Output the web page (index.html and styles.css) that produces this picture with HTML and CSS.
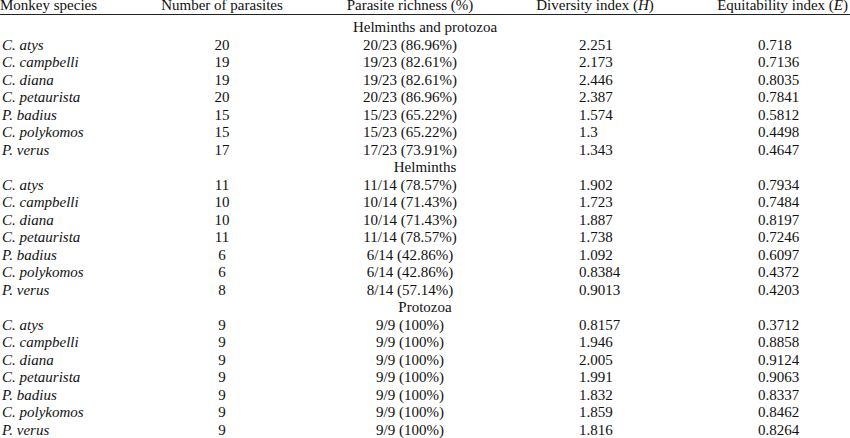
FILE: index.html
```html
<!DOCTYPE html>
<html>
<head>
<meta charset="utf-8">
<link rel="stylesheet" href="styles.css">
</head>
<body>
<table class="data">
  <colgroup>
    <col class="c1"><col class="c2"><col class="c3"><col class="c4"><col class="c5">
  </colgroup>
  <thead>
    <tr>
      <th class="species-h">Monkey species</th>
      <th class="center">Number of parasites</th>
      <th class="center">Parasite richness (%)</th>
      <th class="center">Diversity index (<i>H</i>)</th>
      <th class="eq-h">Equitability index (<i>E</i>)</th>
    </tr>
  </thead>
  <tbody>
    <tr class="section first"><td colspan="5">Helminths and protozoa</td></tr>
    <tr><td class="sp">C. atys</td><td class="center">20</td><td class="center">20/23 (86.96%)</td><td class="div">2.251</td><td class="eq">0.718</td></tr>
    <tr><td class="sp">C. campbelli</td><td class="center">19</td><td class="center">19/23 (82.61%)</td><td class="div">2.173</td><td class="eq">0.7136</td></tr>
    <tr><td class="sp">C. diana</td><td class="center">19</td><td class="center">19/23 (82.61%)</td><td class="div">2.446</td><td class="eq">0.8035</td></tr>
    <tr><td class="sp">C. petaurista</td><td class="center">20</td><td class="center">20/23 (86.96%)</td><td class="div">2.387</td><td class="eq">0.7841</td></tr>
    <tr><td class="sp">P. badius</td><td class="center">15</td><td class="center">15/23 (65.22%)</td><td class="div">1.574</td><td class="eq">0.5812</td></tr>
    <tr><td class="sp">C. polykomos</td><td class="center">15</td><td class="center">15/23 (65.22%)</td><td class="div">1.3</td><td class="eq">0.4498</td></tr>
    <tr><td class="sp">P. verus</td><td class="center">17</td><td class="center">17/23 (73.91%)</td><td class="div">1.343</td><td class="eq">0.4647</td></tr>
    <tr class="section"><td colspan="5">Helminths</td></tr>
    <tr><td class="sp">C. atys</td><td class="center">11</td><td class="center">11/14 (78.57%)</td><td class="div">1.902</td><td class="eq">0.7934</td></tr>
    <tr><td class="sp">C. campbelli</td><td class="center">10</td><td class="center">10/14 (71.43%)</td><td class="div">1.723</td><td class="eq">0.7484</td></tr>
    <tr><td class="sp">C. diana</td><td class="center">10</td><td class="center">10/14 (71.43%)</td><td class="div">1.887</td><td class="eq">0.8197</td></tr>
    <tr><td class="sp">C. petaurista</td><td class="center">11</td><td class="center">11/14 (78.57%)</td><td class="div">1.738</td><td class="eq">0.7246</td></tr>
    <tr><td class="sp">P. badius</td><td class="center">6</td><td class="center">6/14 (42.86%)</td><td class="div">1.092</td><td class="eq">0.6097</td></tr>
    <tr><td class="sp">C. polykomos</td><td class="center">6</td><td class="center">6/14 (42.86%)</td><td class="div">0.8384</td><td class="eq">0.4372</td></tr>
    <tr><td class="sp">P. verus</td><td class="center">8</td><td class="center">8/14 (57.14%)</td><td class="div">0.9013</td><td class="eq">0.4203</td></tr>
    <tr class="section"><td colspan="5">Protozoa</td></tr>
    <tr><td class="sp">C. atys</td><td class="center">9</td><td class="center">9/9 (100%)</td><td class="div">0.8157</td><td class="eq">0.3712</td></tr>
    <tr><td class="sp">C. campbelli</td><td class="center">9</td><td class="center">9/9 (100%)</td><td class="div">1.946</td><td class="eq">0.8858</td></tr>
    <tr><td class="sp">C. diana</td><td class="center">9</td><td class="center">9/9 (100%)</td><td class="div">2.005</td><td class="eq">0.9124</td></tr>
    <tr><td class="sp">C. petaurista</td><td class="center">9</td><td class="center">9/9 (100%)</td><td class="div">1.991</td><td class="eq">0.9063</td></tr>
    <tr><td class="sp">P. badius</td><td class="center">9</td><td class="center">9/9 (100%)</td><td class="div">1.832</td><td class="eq">0.8337</td></tr>
    <tr><td class="sp">C. polykomos</td><td class="center">9</td><td class="center">9/9 (100%)</td><td class="div">1.859</td><td class="eq">0.8462</td></tr>
    <tr><td class="sp">P. verus</td><td class="center">9</td><td class="center">9/9 (100%)</td><td class="div">1.816</td><td class="eq">0.8264</td></tr>
  </tbody>
</table>
</body>
</html>
```
FILE: styles.css
```css
html, body {
  margin: 0;
  padding: 0;
  background: #fff;
}
body {
  font-family: "Liberation Serif", "Times New Roman", serif;
  font-size: 15px;
  color: #111;
  overflow: hidden;
}
.data {
  width: 850px;
  table-layout: fixed;
  border-collapse: collapse;
  margin-top: -3.5px;
}
.c1 { width: 150px; }
.c2 { width: 144px; }
.c3 { width: 232px; }
.c4 { width: 138px; }
.c5 { width: 186px; }
th, td {
  padding: 0;
  height: 17.5px;
  line-height: 17.5px;
  white-space: nowrap;
  font-weight: normal;
  vertical-align: top;
}
thead th {
  border-bottom: 1.5px solid #222;
  padding-bottom: 0;
}
.species-h { text-align: left; }
.center { text-align: center; }
.eq-h { text-align: right; padding-right: 2px; }
.section td { text-align: center; }
.section.first td { padding-top: 4px; }
.sp { font-style: italic; padding-left: 2px; }
.div { padding-left: 53px; }
.eq { padding-left: 94px; }
```
